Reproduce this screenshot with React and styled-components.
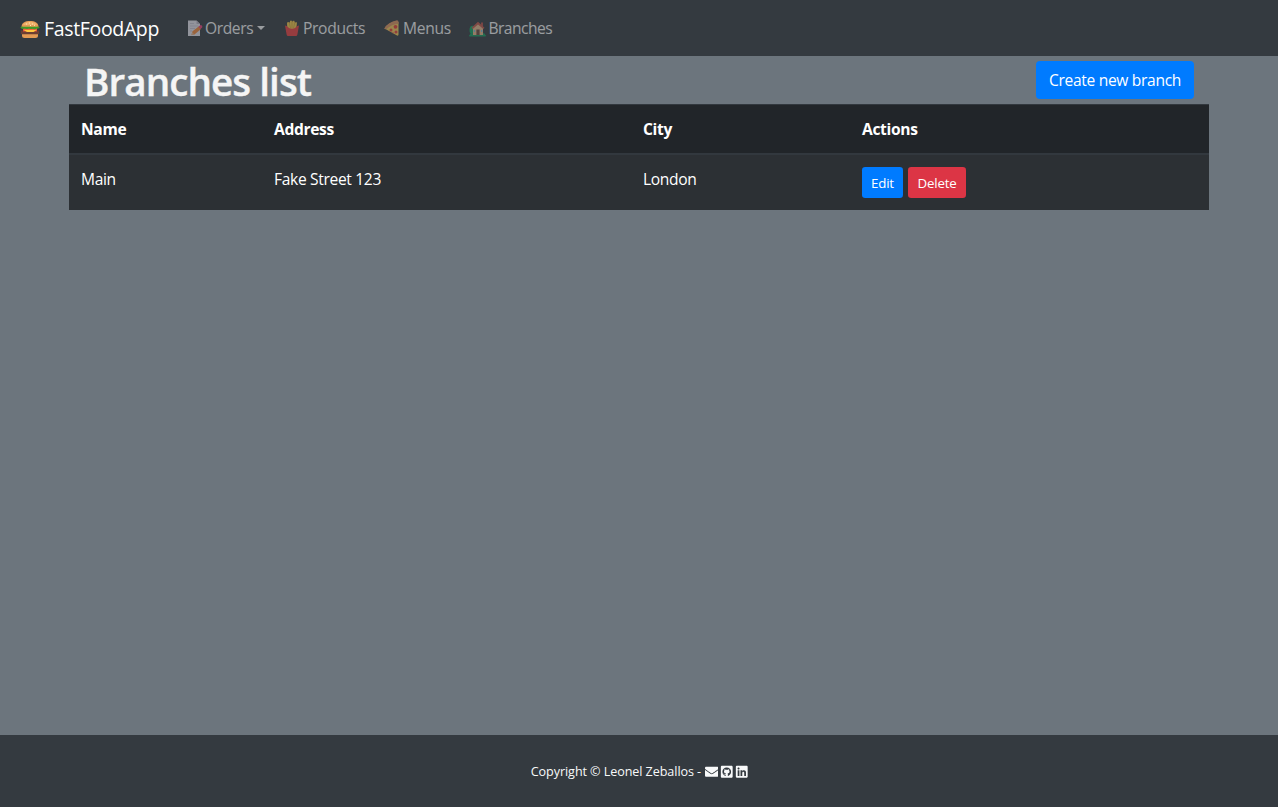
import React from 'react';
import styled, { createGlobalStyle } from 'styled-components';
import { FaEnvelope, FaGithubSquare, FaLinkedin } from 'react-icons/fa';

const GlobalStyle = createGlobalStyle`
  *, *::before, *::after { box-sizing: border-box; }
  body {
    margin: 0;
    background: #6c757d;
    color: #fff;
    font-family: 'Segoe UI', 'Open Sans', 'Noto Sans', sans-serif;
    font-size: 15.6px;
    line-height: 24px;
    letter-spacing: -0.34px;
  }
`;

const Page = styled.div`
  display: flex;
  flex-direction: column;
  min-height: 100vh;
`;

const Navbar = styled.nav`
  display: flex;
  align-items: center;
  height: 56px;
  padding: 0 20px;
  background: #343a40;
`;

const Brand = styled.a`
  display: flex;
  align-items: center;
  gap: 4px;
  width: 167px;
  padding-top: 2px;
  color: #fff;
  font-size: 19.5px;
  line-height: 30px;
  white-space: nowrap;
`;

const NavLink = styled.a`
  display: flex;
  align-items: center;
  width: ${(p) => p.$width}px;
  color: #fff;
  opacity: 0.5;
  white-space: nowrap;
  letter-spacing: ${(p) => p.$spacing || -0.4}px;
`;

const Emoji = styled.svg`
  flex: none;
  width: ${(p) => p.$size || 16}px;
  height: ${(p) => p.$size || 16}px;
  margin-right: ${(p) => p.$gap || 0}px;
`;

const Caret = styled.span`
  margin-left: 4px;
  border-top: 4.8px solid;
  border-left: 4.8px solid transparent;
  border-right: 4.8px solid transparent;
`;

const Main = styled.main`
  flex: 1;
  width: 1140px;
  margin: 0 auto;
`;

const Heading = styled.header`
  display: flex;
  justify-content: space-between;
  align-items: center;
  height: 48px;
  padding: 0 15px;
`;

const Title = styled.h1`
  margin: 1px 0 0;
  color: #f5f5f5;
  font-size: 38.6px;
  font-weight: 600;
  line-height: 48px;
  letter-spacing: -0.93px;
  white-space: nowrap;
  -webkit-text-stroke: 0.4px #f5f5f5;
`;

const Button = styled.button`
  width: ${(p) => p.$width}px;
  height: ${(p) => (p.$small ? 31 : 38)}px;
  padding: 0;
  border: 0;
  border-radius: ${(p) => (p.$small ? 3.2 : 4)}px;
  background: ${(p) => (p.$danger ? '#dc3545' : '#007bff')};
  color: #fff;
  font-family: inherit;
  font-size: ${(p) => (p.$small ? 13.3 : 15.6)}px;
  letter-spacing: ${(p) => (p.$small ? -0.2 : -0.32)}px;
  white-space: nowrap;
`;

const Table = styled.table`
  width: 100%;
  table-layout: fixed;
  border-collapse: separate;
  border-spacing: 0;
  background: #2c3034;
`;

const HeadCell = styled.th`
  width: ${(p) => p.$width}px;
  height: 51px;
  padding: 0 12px 1px;
  border-top: 1px solid #32383e;
  border-bottom: 2px solid #32383e;
  background: #212529;
  text-align: left;
  font-weight: 700;
`;

const Cell = styled.td`
  height: 55px;
  padding: 12px 12px 0;
  vertical-align: top;
`;

const Actions = styled.div`
  display: flex;
  gap: 5px;
`;

const Footer = styled.footer`
  display: flex;
  justify-content: center;
  align-items: center;
  height: 72px;
  padding: 2px 0 0 1px;
  background: #343a40;
  color: #f8f9fa;
  font-size: 12.6px;
  letter-spacing: -0.08px;
`;

const Copyright = styled.span`
  width: 174px;
  white-space: nowrap;
`;

const Social = styled.a`
  display: flex;
  margin-right: ${(p) => p.$gap || 0}px;
`;

const Burger = () => (
  <Emoji $size={20} viewBox="0 0 20 20">
    <path d="M1.5 8C1.5 3.8 5 2 10 2s8.500 1.800 8.500 6z" fill="#e39b54" />
    <path d="M3 6c1-2.500 4-3.300 7-3.300S16 3.500 17 6z" fill="#f0b26d" />
    <path d="M6 5h1M9 4h1M12 5h1M10 6.500h1M14 6.300h1" stroke="#ffe5b5" />
    <path d="M.8 11.500h18.400v2.800q-1 1.700-3 1.700H3.800q-2 0-3-1.700z" fill="#6c3f32" />
    <path d="M3 9h14v3.500H3z" fill="#e9483d" />
    <path d="M3 10.700h14l-3.500 2.300H7z" fill="#ffc83d" />
    <path d="M.3 8.500Q1.500 7.200 3 7.700h14q1.500-.5 2.700.8-1.200 1.600-3 1-2 1.300-3.700.2-2 .9-4-.2-2 1.100-4 0-3.300 1.300-4.700-1z" fill="#3f9a27" />
    <path d="M2 15.200h16v1.300Q18 19 15.500 19h-11Q2 19 2 16.500z" fill="#e39b54" />
  </Emoji>
);

const Memo = () => (
  <Emoji $size={16} $gap={2} viewBox="0 0 16 16">
    <path d="M1 .5h8.500L13 4v12H1z" fill="#f0eef8" />
    <path d="M9.500 .5V4H13z" fill="#bdb8c9" />
    <path d="M3 3.500h4M3 6h8M3 8.500h5M3 11h2" stroke="#d2cede" />
    <path d="M4.500 15l1-3.800L12 6.300l2 2.700-6.500 5.500z" fill="#ff8c3a" />
    <path d="M4.200 15.300l1-3 2 2z" fill="#eec09a" />
    <path d="M11.500 6.700L13.200 5.300q1-.6 1.800.5t0 2L13.500 9z" fill="#f5407f" />
  </Emoji>
);

const Fries = () => (
  <Emoji $size={16} $gap={3} viewBox="0 0 16 16">
    <path d="M3 2.500l2-.6L6 3V.8h2v1L10 .5l1 2 2-.3-.7 6.800h-9z" fill="#ffd34b" />
    <path d="M5 2l1.500 6M8 1v7M11 2l-1.500 6" stroke="#d69a2c" strokeWidth=".6" />
    <path d="M1 5.500q2 .1 2.800 1.500Q5 8.700 8 8.700T12.200 7Q13 5.600 15 5.500L13.400 14.500q-.2 1.500-1.500 1.500H4.100Q2.800 16 2.600 14.500z" fill="#f83f3f" />
  </Emoji>
);

const Pizza = () => (
  <Emoji $size={16} $gap={3} viewBox="0 0 16 16">
    <path d="M.5 8.500Q4 2.500 13 1l1.500 1v12.500q0 1.500-1.500 1z" fill="#ffd35a" />
    <path d="M.3 8.500Q4 2 13 .3q1.500 0 1.500 2v1.500Q8 4 2.200 9.300L.7 9z" fill="#e89860" />
    <g fill="#f33f3a"><circle cx="11.500" cy="6.800" r="1.900" /><circle cx="7" cy="10" r="1.500" /><circle cx="12" cy="12" r="1.500" /><circle cx="9" cy="12.800" r=".6" /></g>
  </Emoji>
);

const House = () => (
  <Emoji $size={17} $gap={2.4} viewBox="0 0 17 17">
    <ellipse cx="3.500" cy="10" rx="3" ry="4.300" fill="#14a763" />
    <path d="M.5 16q0-3 3-3h10q3 0 3 3z" fill="#16a060" />
    <path d="M12 2.500h2v4h-2z" fill="#bb5148" />
    <path d="M4 7.500L9 3.500l5 4V15H4z" fill="#f0bd8e" />
    <path d="M9 1.800l6.500 5.900-1.200 1.400L9 4.500 3.700 9.100 2.500 7.700z" fill="#cb594a" />
    <path d="M7.400 9.500h3.200V15H7.400z" fill="#70483e" />
    <path d="M12 10h1.300v2H12zM4.800 10h1.300v2H4.800z" fill="#73c3ea" />
    <path d="M.3 15h16.400v1.500H.3z" fill="#16a060" />
  </Emoji>
);

export default function App() {
  return (
    <Page>
      <GlobalStyle />
      <Navbar>
        <Brand><Burger />FastFoodApp</Brand>
        <NavLink $width={97}><Memo />Orders<Caret /></NavLink>
        <NavLink $width={100} $spacing={-0.32}><Fries />Products</NavLink>
        <NavLink $width={85} $spacing={-0.32}><Pizza />Menus</NavLink>
        <NavLink $width={90} $spacing={-0.5}><House />Branches</NavLink>
      </Navbar>
      <Main>
        <Heading>
          <Title>Branches list</Title>
          <Button $width={158}>Create new branch</Button>
        </Heading>
        <Table>
          <thead>
            <tr>
              <HeadCell $width={193}>Name</HeadCell>
              <HeadCell $width={369}>Address</HeadCell>
              <HeadCell $width={219}>City</HeadCell>
              <HeadCell $width={359}>Actions</HeadCell>
            </tr>
          </thead>
          <tbody>
            <tr>
              <Cell>Main</Cell>
              <Cell>Fake Street 123</Cell>
              <Cell>London</Cell>
              <Cell>
                <Actions>
                  <Button $small $width={41}>Edit</Button>
                  <Button $small $danger $width={58}>Delete</Button>
                </Actions>
              </Cell>
            </tr>
          </tbody>
        </Table>
      </Main>
      <Footer>
        <Copyright>Copyright © Leonel Zeballos -</Copyright>
        <Social $gap={2}><FaEnvelope size={13.5} /></Social>
        <Social $gap={1}><FaGithubSquare size={13.5} /></Social>
        <Social><FaLinkedin size={13.5} /></Social>
      </Footer>
    </Page>
  );
}
